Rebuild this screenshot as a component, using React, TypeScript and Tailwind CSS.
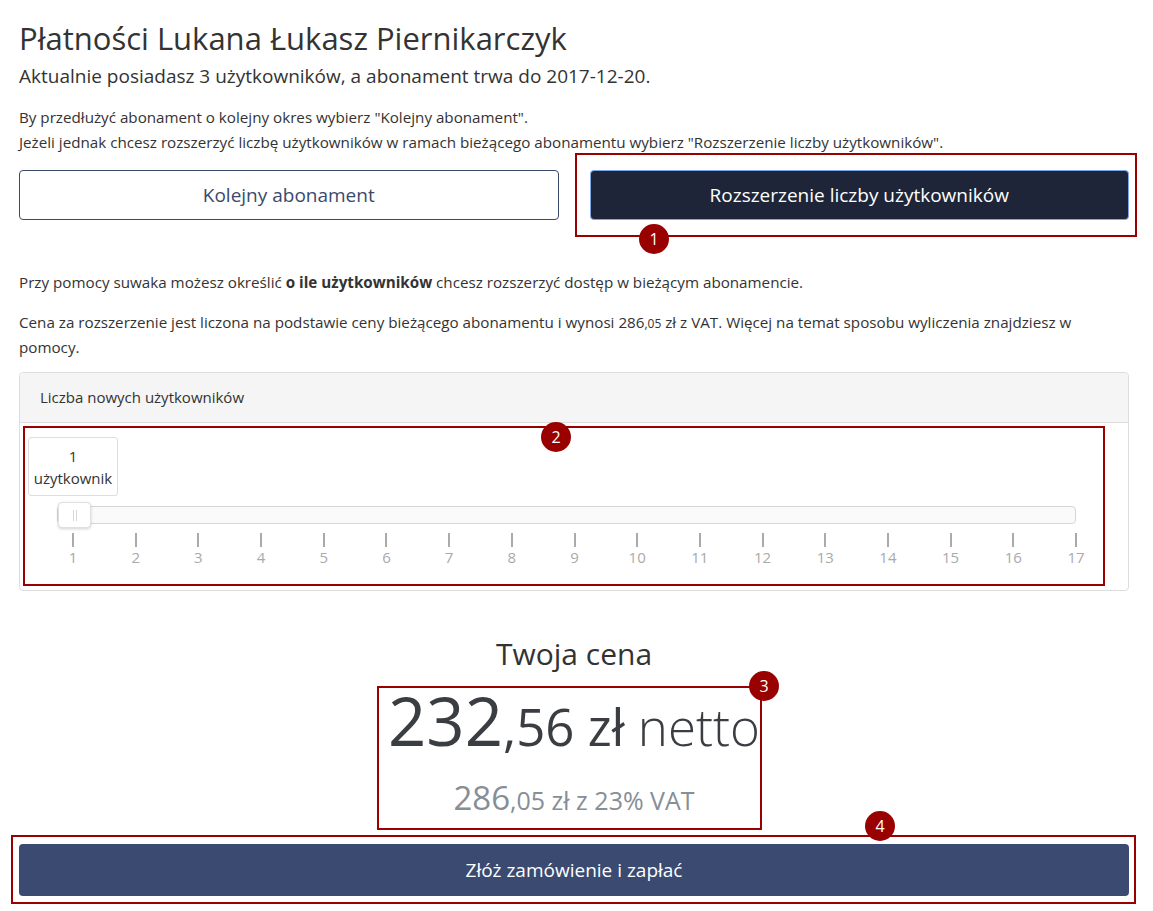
import React from "react";

const ticks = Array.from({ length: 17 }, (_, i) => i + 1);

function Badge({ n, x, y }: { n: number; x: number; y: number }) {
  return (
    <div
      className="absolute w-[30px] h-[30px] rounded-full bg-[#990000] text-white flex items-center justify-center text-[16px] leading-none"
      style={{ left: x - 15, top: y - 15 }}
    >
      {n}
    </div>
  );
}

function Box({ x, y, w, h }: { x: number; y: number; w: number; h: number }) {
  return (
    <div
      className="absolute border-2 border-[#990000] pointer-events-none"
      style={{ left: x, top: y, width: w, height: h }}
    />
  );
}

export default function App() {
  return (
    <div
      className="relative w-[1153px] h-[911px] overflow-hidden bg-white text-[#333]"
      style={{ fontFamily: '"Open Sans", "Noto Sans", sans-serif' }}
    >
      <div className="pl-[19px] w-[1129px] pt-[18px]">
        <h1 className="text-[31px] leading-[40px] font-medium text-[#333]">
          Płatności Lukana Łukasz Piernikarczyk
        </h1>
        <p className="text-[19px] leading-[26px] mt-[5px] text-[#333]">
          Aktualnie posiadasz 3 użytkowników, a abonament trwa do 2017-12-20.
        </p>
        <p className="text-[15.2px] leading-[25px] mt-[16px] text-[#333]">
          By przedłużyć abonament o kolejny okres wybierz "Kolejny abonament".
          <br />
          Jeżeli jednak chcesz rozszerzyć liczbę użytkowników w ramach bieżącego abonamentu wybierz "Rozszerzenie liczby użytkowników".
        </p>
        <div className="grid grid-cols-2 gap-[31px] mt-[15px]">
          <button className="h-[50px] rounded-[4px] border border-[#3b4a6b] bg-white text-[#3b4a6b] text-[19px]">
            Kolejny abonament
          </button>
          <button className="h-[50px] rounded-[4px] border border-[#7fa6e8] bg-[#1e2538] text-white text-[19px] font-medium">
            Rozszerzenie liczby użytkowników
          </button>
        </div>
        <p className="text-[15.2px] leading-[25px] mt-[50px] text-[#333]">
          Przy pomocy suwaka możesz określić <b className="font-bold">o ile użytkowników</b> chcesz rozszerzyć dostęp w bieżącym abonamencie.
        </p>
        <p className="text-[15.2px] leading-[25px] mt-[15px] text-[#333]">
          <span>Cena za rozszerzenie jest liczona na podstawie ceny bieżącego abonamentu i wynosi 286</span>
          <small className="text-[12px] leading-none">,05</small>
          <span> zł z VAT. Więcej na temat sposobu wyliczenia znajdziesz w</span>
          <br />
          <span>pomocy.</span>
        </p>

        <div className="mt-[12px] border border-[#dddddd] rounded-[4px] h-[219px] flex flex-col">
          <div className="h-[50px] bg-[#f5f5f5] border-b border-[#dddddd] flex items-center pl-[20px] text-[15px] text-[#333] rounded-t-[4px]">
            Liczba nowych użytkowników
          </div>
          <div className="flex-1 pt-[14px] pl-[8px]">
            <div className="w-[90px] h-[59px] border border-[#dddddd] rounded-[3px] flex flex-col items-center justify-center text-[15px] leading-[22px] text-[#333]">
              <span>1</span>
              <span>użytkownik</span>
            </div>
            <div className="relative ml-[29px] w-[1019px] mt-[10px] h-[18px] rounded-[4px] border border-[#d6d6d6] bg-[#fafafa]">
              <div className="absolute left-0 top-[-5px] w-[33px] h-[26px] rounded-[4px] bg-white border border-[#e0e0e0] shadow-[0_1px_3px_rgba(0,0,0,0.18)] flex items-center justify-center gap-[2px]">
                <span className="w-px h-[11px] bg-[#d8d8d8]" />
                <span className="w-px h-[11px] bg-[#d8d8d8]" />
              </div>
            </div>
            <div className="ml-[45px] w-[1003px] mt-[9px] flex justify-between">
              {ticks.map((t) => (
                <div key={t} className="w-0 flex flex-col items-center">
                  <span className="w-[2px] h-[14px] bg-[#aaaaaa]" />
                  <span className="text-[15px] leading-[20px] text-[#aaaaaa] whitespace-nowrap">{t}</span>
                </div>
              ))}
            </div>
          </div>
        </div>

        <div className="mt-[43px] text-center text-[30px] leading-[40px] text-[#333]">Twoja cena</div>
        <div className="mt-[8px] text-center leading-[76px] text-[#3a3d42] whitespace-nowrap">
          <span className="text-[67px]">232</span>
          <span className="text-[51px]">,56 </span>
          <span className="text-[51px] font-medium">zł</span>
          <span className="text-[51px] font-light"> netto</span>
        </div>
        <div className="mt-[0px] text-center leading-[40px] text-[#868e96] whitespace-nowrap">
          <span className="text-[33px]">286</span>
          <span className="text-[25px]">,05 </span>
          <span className="text-[25px] font-medium">zł</span>
          <span className="text-[25px]"> z 23% VAT</span>
        </div>
        <button className="mt-[20px] w-full h-[52px] rounded-[4px] bg-[#3a4a70] text-white text-[19px] font-medium">
          Złóż zamówienie i zapłać
        </button>
      </div>

      <Box x={575} y={153} w={562} h={84} />
      <Box x={23} y={426} w={1082} h={160} />
      <Box x={377} y={686} w={385} h={144} />
      <Box x={11} y={835} w={1125} h={69} />
      <Badge n={1} x={654} y={239} />
      <Badge n={2} x={556} y={437} />
      <Badge n={3} x={764} y={686} />
      <Badge n={4} x={880} y={826} />
    </div>
  );
}
